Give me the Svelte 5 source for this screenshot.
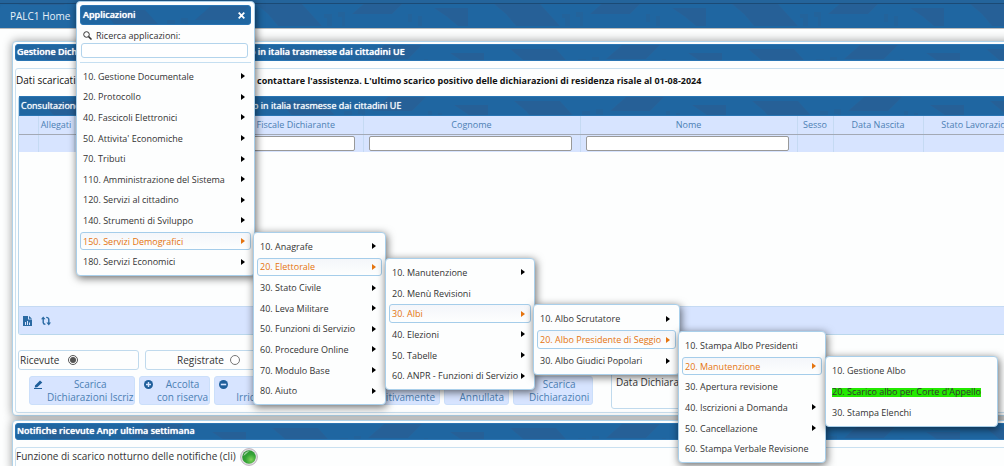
<script lang="ts">
	interface MenuItem {
		label: string;
		sub?: boolean;
		active?: boolean;
		marked?: boolean;
	}

	interface Menu {
		x: number;
		y: number;
		w: number;
		h: number;
		items: MenuItem[];
	}

	let search = $state('');
	let stato = $state('ricevute');

	const menus: Menu[] = [
		{
			x: 76, y: 1, w: 179, h: 275,
			items: [
				{ label: '10. Gestione Documentale', sub: true },
				{ label: '20. Protocollo', sub: true },
				{ label: '40. Fascicoli Elettronici', sub: true },
				{ label: "50. Attivita' Economiche", sub: true },
				{ label: '70. Tributi', sub: true },
				{ label: '110. Amministrazione del Sistema', sub: true },
				{ label: '120. Servizi al cittadino', sub: true },
				{ label: '140. Strumenti di Sviluppo', sub: true },
				{ label: '150. Servizi Demografici', sub: true, active: true },
				{ label: '180. Servizi Economici', sub: true }
			]
		},
		{
			x: 253, y: 232, w: 133, h: 173,
			items: [
				{ label: '10. Anagrafe', sub: true },
				{ label: '20. Elettorale', sub: true, active: true },
				{ label: '30. Stato Civile', sub: true },
				{ label: '40. Leva Militare', sub: true },
				{ label: '50. Funzioni di Servizio', sub: true },
				{ label: '60. Procedure Online', sub: true },
				{ label: '70. Modulo Base', sub: true },
				{ label: '80. Aiuto', sub: true }
			]
		},
		{
			x: 385, y: 258, w: 150, h: 132,
			items: [
				{ label: '10. Manutenzione', sub: true },
				{ label: '20. Menù Revisioni' },
				{ label: '30. Albi', sub: true, active: true },
				{ label: '40. Elezioni', sub: true },
				{ label: '50. Tabelle', sub: true },
				{ label: '60. ANPR - Funzioni di Servizio', sub: true }
			]
		},
		{
			x: 533, y: 304, w: 147, h: 71,
			items: [
				{ label: '10. Albo Scrutatore', sub: true },
				{ label: '20. Albo Presidente di Seggio', sub: true, active: true },
				{ label: '30. Albo Giudici Popolari', sub: true }
			]
		},
		{
			x: 678, y: 331, w: 148, h: 132,
			items: [
				{ label: '10. Stampa Albo Presidenti' },
				{ label: '20. Manutenzione', sub: true, active: true },
				{ label: '30. Apertura revisione' },
				{ label: '40. Iscrizioni a Domanda', sub: true },
				{ label: '50. Cancellazione', sub: true },
				{ label: '60. Stampa Verbale Revisione' }
			]
		},
		{
			x: 825, y: 356, w: 173, h: 71,
			items: [
				{ label: '10. Gestione Albo' },
				{ label: "20. Scarico albo per Corte d'Appello", marked: true },
				{ label: '30. Stampa Elenchi' }
			]
		}
	];
</script>

<div class="page">
	<header class="topbar">
		<a class="tab" href="#home">PALC1 Home</a>
	</header>

	<main>
		<section class="panel">
			<h1 class="bar">Gestione Dichiarazioni di iscrizione per il trasferimento in italia trasmesse dai cittadini UE</h1>
			<div class="inner">
				<p class="notice">
					<span class="notice-lead">Dati scaricati</span>
					<b>contattare l'assistenza. L'ultimo scarico positivo delle dichiarazioni di residenza risale al 01-08-2024</b>
				</p>

				<div class="grid">
					<h2 class="bar grid-title">Consultazione Dichiarazioni di iscrizione al trasferimento in italia trasmesse dai cittadini UE</h2>
					<table>
						<colgroup>
							<col class="c-tick" /><col class="c-all" /><col class="c-data" /><col class="c-cf" />
							<col class="c-name" /><col class="c-name" /><col class="c-sesso" /><col class="c-nascita" /><col />
						</colgroup>
						<thead>
							<tr>
								<th></th><th>Allegati</th><th></th><th>Codice Fiscale Dichiarante</th><th>Cognome</th>
								<th>Nome</th><th>Sesso</th><th>Data Nascita</th><th>Stato Lavorazione</th>
							</tr>
						</thead>
						<tbody>
							<tr>
								<td></td><td></td><td></td>
								<td><input type="text" aria-label="Codice Fiscale Dichiarante" /></td>
								<td><input type="text" aria-label="Cognome" /></td>
								<td><input type="text" aria-label="Nome" /></td>
								<td></td><td></td><td></td>
							</tr>
						</tbody>
					</table>
					<div class="rows"></div>
					<div class="grid-foot">
						<button aria-label="Esporta">
							<svg width="9" height="10" viewBox="0 0 9 10">
								<path fill="#2a6aa3" d="M0 0h5v3.5h4V10H0zM6 0l3 2.7H6z" />
								<path stroke="#d7e4ff" d="M2.5 9V6M4.5 9V5M6.5 9V6.5" />
							</svg>
						</button>
						<button aria-label="Aggiorna">
							<svg width="10" height="10" viewBox="0 0 10 10" fill="none" stroke="#2a6aa3" stroke-width="1.4">
								<path d="M2.2 2v4.6Q2.4 8.2 4.4 8.4M5.2 1.4Q7.6 1.4 7.8 3.4V7.4" />
								<path fill="#2a6aa3" stroke="none" d="M2.2.4 4.6 3.2H0zM7.8 9.6 5.4 6.6H10z" />
							</svg>
						</button>
					</div>
				</div>

				<div class="controls">
					<div class="left">
						<div class="radios">
							<label class="box">Ricevute <input type="radio" value="ricevute" bind:group={stato} /></label>
							<label class="box second">Registrate <input type="radio" value="registrate" bind:group={stato} /></label>
						</div>
						<div class="actions">
							<button class="b-iscriz">
								<svg width="9" height="9" viewBox="0 0 9 9"><path fill="#1f5f9b" d="M1 5.5 6 .4 8.3 2.6 3.2 7.2.8 7.6zM0 8h8v1H0z" /></svg>
								<span>Scarica<br />Dichiarazioni Iscriz</span>
							</button>
							<button class="b-accolta">
								<svg width="9" height="9" viewBox="0 0 9 9"><circle cx="4.5" cy="4.5" r="4.5" fill="#1f5f9b" /><path stroke="#d7e4ff" stroke-width="1.4" d="M4.5 2v5M2 4.5h5" /></svg>
								<span>Accolta<br />con riserva</span>
							</button>
							<button class="b-irr">
								<svg width="9" height="9" viewBox="0 0 9 9"><circle cx="4.5" cy="4.5" r="4.5" fill="#1f5f9b" /><path stroke="#d7e4ff" stroke-width="1.6" d="M1.8 4.5h5.4" /></svg>
								<span><br />Irricevibile</span>
							</button>
							<button class="b-def"><span><br />Definitivamente</span></button>
							<button class="b-ann"><span><br />Annullata</span></button>
							<button class="b-dich"><span>Scarica<br />Dichiarazioni</span></button>
						</div>
					</div>
					<div class="box date">Data Dichiaraz</div>
				</div>
			</div>
		</section>

		<section class="panel last">
			<h1 class="bar">Notifiche ricevute Anpr ultima settimana</h1>
			<div class="inner">
				<p class="cli">
					Funzione di scarico notturno delle notifiche (cli)
					<svg width="18" height="18" viewBox="0 0 18 18">
						<defs>
							<radialGradient id="led" cx=".65" cy=".7" r=".8">
								<stop offset="0" stop-color="#7fd35a" />
								<stop offset=".5" stop-color="#35a436" />
								<stop offset="1" stop-color="#2b8c33" />
							</radialGradient>
						</defs>
						<circle cx="9" cy="9" r="8.4" fill="#e3dfe4" stroke="#bdb4bd" />
						<circle cx="9" cy="9" r="6.8" fill="url(#led)" />
						<path fill="#fff" opacity=".55" d="M3.4 8C4 4.5 7 3 9.6 3.3 7 4.3 6 6.5 3.4 8z" />
					</svg>
				</p>
			</div>
		</section>
	</main>

	{#each menus as menu, i}
		<nav class="menu" style="left:{menu.x}px; top:{menu.y}px; width:{menu.w}px; height:{menu.h}px">
			{#if i === 0}
				<div class="bar menu-title">
					Applicazioni
					<button aria-label="Chiudi">
						<svg width="7" height="7" viewBox="0 0 7 7"><path stroke="#fff" stroke-width="1.8" d="M.7.7l5.6 5.6M6.3.7.7 6.3" /></svg>
					</button>
				</div>
				<div class="search">
					<label for="cerca">
						<svg width="9" height="9" viewBox="0 0 9 9" fill="none" stroke="#333"><circle cx="3.5" cy="3.5" r="2.8" /><path stroke-width="1.5" d="M5.6 5.6 8.5 8.5" /></svg>
						Ricerca applicazioni:
					</label>
					<input id="cerca" type="text" bind:value={search} />
				</div>
			{/if}
			<ul>
				{#each menu.items as item}
					<li>
						<button class="item" class:active={item.active}>
							<span class:marked={item.marked}>{item.label}</span>
							{#if item.sub}
								<svg width="4" height="6" viewBox="0 0 4 6"><path fill="currentColor" d="M0 0l4 3-4 3z" /></svg>
							{/if}
						</button>
					</li>
				{/each}
			</ul>
		</nav>
	{/each}
</div>

<style>
	:global(body) {
		background: #fdfefe;
		overflow: hidden;
	}

	.page {
		position: relative;
		font: 10px/13px 'Open Sans', 'Noto Sans', sans-serif;
		color: #333;
		overflow: hidden;
		height: 100vh;
	}

	.page * {
		box-sizing: border-box;
	}

	h1,
	h2,
	p,
	ul {
		margin: 0;
		padding: 0;
	}

	button {
		font: inherit;
		color: inherit;
		border: 0;
		padding: 0;
		background: none;
	}

	svg {
		display: block;
		flex: none;
	}

	.topbar,
	.bar {
		background: #1f66a1
			url("data:image/svg+xml,%3Csvg xmlns='http://www.w3.org/2000/svg' width='238' height='28'%3E%3Cg fill='%23285f95'%3E%3Cpath d='M18 4h46l20 22H40L30 14zM130 0h38l-14 14h-40zM196 8h34v18h-10l-12-10z' opacity='.8'/%3E%3Cpath d='M86 14h8v12h-5v-8h-3zM100 12h7v14h-3v-9h-4zM170 14h4v8h-4zM180 16h4v10h-4z' opacity='.5'/%3E%3C/g%3E%3C/svg%3E");
	}

	.topbar {
		height: 29px;
		padding-top: 5px;
		border-bottom: 1px solid #bbb;
		box-shadow: inset 0 3px #24649b, inset 0 4px #1b4a75;
	}

	.tab {
		display: inline-block;
		height: 23px;
		padding: 0 10px;
		line-height: 23px;
		color: #e6f0f8;
		text-decoration: none;
		background: #2168a3;
		border-top-left-radius: 3px;
	}

	main {
		padding: 12px 0 0 12px;
	}

	/* panels run on past the right edge of the window */
	.panel {
		margin-right: -38px;
		padding: 2px;
		border: 1px solid #b0d2e8;
		border-radius: 4px;
		background: #fdfefe;
		box-shadow: 0 0 10px rgba(0, 0, 0, 0.4);
	}

	.last {
		margin-top: 4px;
	}

	.bar {
		height: 17px;
		padding: 0 1px;
		border: 1px solid #2a75b3;
		border-radius: 3px;
		font-size: 9px;
		line-height: 14px;
		font-weight: 600;
		color: #fff;
		text-shadow: 0 0 1px #fff;
		white-space: nowrap;
		overflow: hidden;
	}

	.inner {
		margin-top: 7px;
		padding-bottom: 3px;
		border: 1px solid #c9e0f0;
		border-radius: 3px;
	}

	.notice {
		display: flex;
		height: 27px;
		line-height: 23px;
		white-space: nowrap;
		color: #111;
	}

	.notice-lead {
		width: 241px;
	}

	.notice b {
		font-size: 9px;
		font-weight: 700;
	}

	.grid {
		margin: 0 2px;
		border: 1px solid #b9d7ec;
		border-top: 0;
		border-radius: 3px;
	}

	.bar.grid-title {
		height: 20px;
		line-height: 18px;
		font-weight: 400;
		border-radius: 0;
	}

	table {
		width: 100%;
		table-layout: fixed;
		border-collapse: collapse;
		background: #d7e4ff;
		color: #4c80b4;
		font-size: 9px;
	}

	.c-tick { width: 19px; }
	.c-all { width: 36px; }
	.c-data { width: 124px; }
	.c-cf { width: 165px; }
	.c-name { width: 217px; }
	.c-sesso { width: 36px; }
	.c-nascita { width: 90px; }

	th {
		height: 18px;
		padding: 0;
		font-weight: 400;
		white-space: nowrap;
		border-right: 1px solid #c5daf3;
		border-bottom: 1px solid #a3a9b5;
	}

	td {
		height: 18px;
		padding: 0 8px 0 5px;
		line-height: 0;
		border-right: 1px solid #c5daf3;
	}

	td input {
		width: 100%;
		height: 15px;
		border: 1px solid #999;
		border-radius: 2px;
		background: #fff;
	}

	.rows {
		height: 155px;
		border-bottom: 1px solid #c5daf3;
	}

	.grid-foot {
		display: flex;
		align-items: center;
		gap: 9px;
		height: 27px;
		padding-left: 4px;
		background: #d7e4ff;
	}

	.controls {
		display: flex;
		gap: 18px;
		margin: 15px 2px 0;
	}

	.left {
		width: 575px;
	}

	.radios {
		display: flex;
		gap: 6px;
	}

	.box {
		border: 1px solid #c0daed;
		border-radius: 3px;
	}

	label.box {
		display: flex;
		align-items: center;
		gap: 9px;
		width: 121px;
		height: 20px;
		padding-left: 1px;
	}

	label.second {
		gap: 6px;
		padding-left: 31px;
	}

	label.box input {
		width: 10px;
		height: 10px;
		margin: 0;
		accent-color: #555;
	}

	.date {
		width: 180px;
		height: 59px;
		padding: 25px 4px 0;
	}

	.actions {
		display: flex;
		gap: 4px;
		margin-top: 6px;
		padding-left: 11px;
	}

	.actions button {
		display: flex;
		height: 29px;
		padding: 1px 4px;
		background: #d7e4ff;
		border: 1px solid #cbdffa;
		border-radius: 3px;
		color: #4c80b4;
		text-align: center;
		white-space: nowrap;
	}

	.actions svg {
		margin-top: 2px;
	}

	.actions span {
		flex: 1;
		padding-left: 4px;
	}

	.b-iscriz { width: 106px; }
	.b-accolta { width: 71px; }
	.b-irr { width: 80px; }
	.b-def { width: 143px; }
	.b-ann { width: 65px; }
	.b-dich { width: 80px; }

	.actions .b-def,
	.actions .b-ann {
		text-align: right;
	}

	.actions .b-dich {
		padding-left: 11px;
	}

	.cli {
		display: flex;
		align-items: center;
		gap: 4px;
		height: 17px;
	}

	.menu {
		position: absolute;
		display: flex;
		flex-direction: column;
		padding: 3px;
		background: #fdfefe;
		border: 1px solid #a9cfea;
		border-radius: 4px;
		box-shadow: 1px 2px 8px rgba(0, 0, 0, 0.6);
		font-size: 9px;
	}

	.bar.menu-title {
		display: flex;
		align-items: center;
		justify-content: space-between;
		height: 20px;
		padding: 0 5px 0 2px;
	}

	.search {
		padding: 3px 3px 4px 1px;
		margin-bottom: 3px;
		border-bottom: 1px solid #c5dff1;
	}

	.search label {
		display: flex;
		align-items: center;
		gap: 4px;
		height: 15px;
		padding-left: 2px;
	}

	.search input {
		display: block;
		width: 100%;
		height: 15px;
		border: 1px solid #b3d4ec;
		border-radius: 3px;
		background: #fff;
	}

	.menu ul {
		flex: 1;
		display: flex;
		flex-direction: column;
		list-style: none;
	}

	.menu li {
		flex: 1;
		padding: 1px 0;
	}

	.item {
		display: flex;
		align-items: center;
		justify-content: space-between;
		width: 100%;
		height: 100%;
		padding: 0 5px 0 2px;
		border: 1px solid transparent;
		border-radius: 3px;
		white-space: nowrap;
	}

	.item svg {
		color: #000;
	}

	.item.active,
	.item.active svg {
		color: #e5740f;
	}

	.item.active {
		border-color: #a5cdea;
		background: linear-gradient(#f4f6fa, #fdfefe);
	}

	.marked {
		background: linear-gradient(#23e900, #23e900) 0 3px / 100% 9px no-repeat;
	}
</style>
